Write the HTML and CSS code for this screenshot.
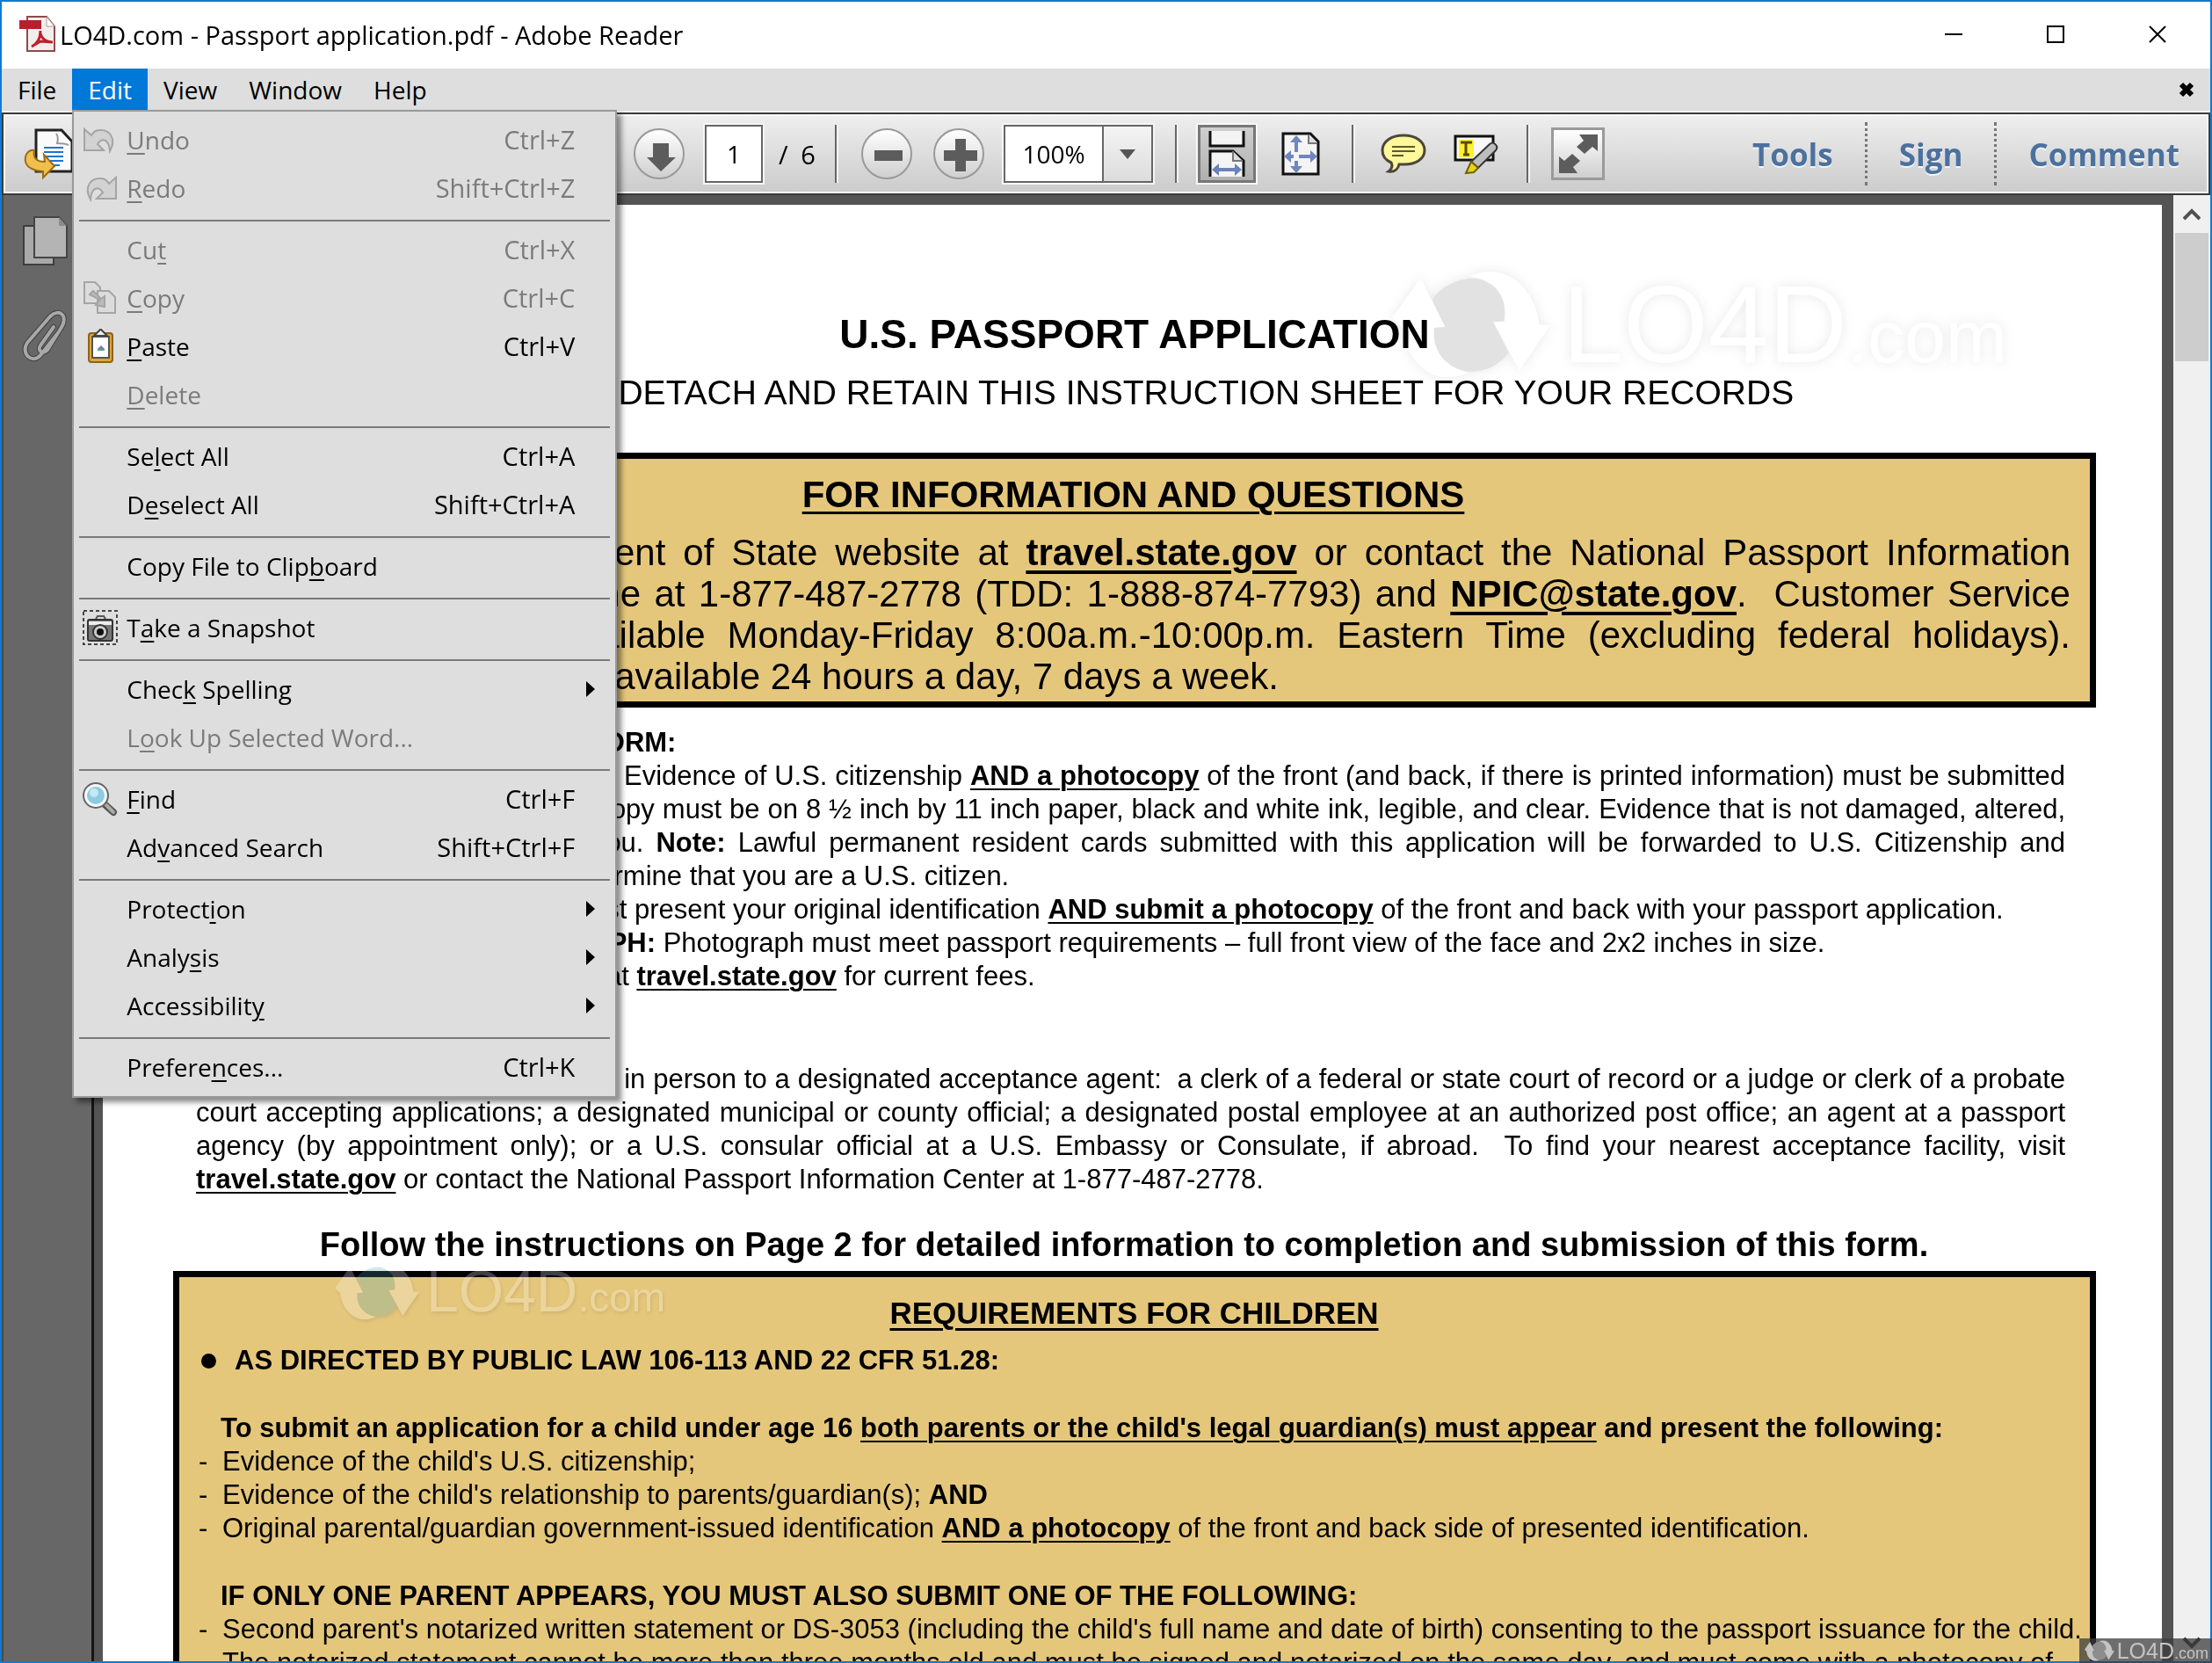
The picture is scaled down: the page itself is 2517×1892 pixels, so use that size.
FILE: index.html
```html
<!DOCTYPE html>
<html lang="en">
<head>
<meta charset="utf-8">
<title>LO4D.com - Passport application.pdf - Adobe Reader</title>
<link rel="stylesheet" href="styles.css">
</head>
<body>
<div class="window">
  <header class="titlebar">
    <svg class="app-icon" width="42" height="42" viewBox="0 0 42 42" aria-hidden="true">
      <path d="M9 1h22l9 11v28H9z" fill="#f3eeee" stroke="#8d4a4c" stroke-width="2"/>
      <path d="M31 1v11h9z" fill="#fff" stroke="#b59a9a"/>
      <path d="M0 5h25v10H0z" fill="#b5202c"/>
      <path d="M14 35c6-3 10-9 10-18M14 35l10-6 14 1M24 20c1 5 5 9 13 10" fill="none" stroke="#c11f2b" stroke-width="3"/>
    </svg>
    <h1 class="title">LO4D.com - Passport application.pdf - Adobe Reader</h1>
    <div class="caption">
      <button class="cap" aria-label="Minimize"><svg width="20" height="20"><path d="M0 10h20" stroke="#000" stroke-width="2"/></svg></button>
      <button class="cap" aria-label="Maximize"><svg width="20" height="20"><path d="M1 1h18v18H1z" fill="none" stroke="#000" stroke-width="2"/></svg></button>
      <button class="cap" aria-label="Close"><svg width="20" height="20"><path d="M1 1l18 18M19 1L1 19" stroke="#000" stroke-width="2"/></svg></button>
    </div>
  </header>

  <nav class="menubar">
    <button class="mb">File</button>
    <div class="mb-open">
      <button class="mb active" aria-expanded="true">Edit</button>
      <div class="menu" role="menu">
        <button class="item" role="menuitem" disabled>
          <svg class="ico" viewBox="0 0 40 40"><path d="M2 8v24h22l-7-7c5-8 13-6 14 8 8-14 0-25-12-24-5 0-7 3-9 6z" fill="#d2d2d2" stroke="#a5a5a5" stroke-width="2"/></svg>
          <span><u>U</u>ndo</span><kbd>Ctrl+Z</kbd></button>
        <button class="item" role="menuitem" disabled>
          <svg class="ico" viewBox="0 0 40 40"><path d="M38 8v24H16l7-7c-5-8-13-6-14 8C1 19 9 8 21 9c5 0 7 3 9 6z" fill="#d2d2d2" stroke="#a5a5a5" stroke-width="2"/></svg>
          <span><u>R</u>edo</span><kbd>Shift+Ctrl+Z</kbd></button>
        <hr>
        <button class="item" role="menuitem" disabled><i class="ico"></i><span>Cu<u>t</u></span><kbd>Ctrl+X</kbd></button>
        <button class="item" role="menuitem" disabled>
          <svg class="ico" viewBox="0 0 40 40"><g fill="#dcdcdc" stroke="#a5a5a5" stroke-width="2"><path d="M2 2h12l6 6v18H2z"/><path d="M17 12h13l7 7v18H17z"/><path d="M8 16l12 6-5 6 10 2V18l-4 3-9-9z" fill="#bbb"/></g></svg>
          <span><u>C</u>opy</span><kbd>Ctrl+C</kbd></button>
        <button class="item" role="menuitem">
          <svg class="ico" viewBox="0 0 40 40"><rect x="7" y="5" width="27" height="33" rx="3" fill="#e0a63a" stroke="#8a6420" stroke-width="2"/><path d="M11 9h19v24H11z" fill="#fff" stroke="#555" stroke-width="2"/><path d="M13 8l4-4 3-3h1l3 3 4 4z" fill="#eee" stroke="#444" stroke-width="2"/><path d="M17 23l4-4 4 4z" fill="#8a6fb5"/><path d="M17 23h8v2h-8z" fill="#5aa77a"/></svg>
          <span><u>P</u>aste</span><kbd>Ctrl+V</kbd></button>
        <button class="item" role="menuitem" disabled><i class="ico"></i><span><u>D</u>elete</span></button>
        <hr>
        <button class="item" role="menuitem"><i class="ico"></i><span>Se<u>l</u>ect All</span><kbd>Ctrl+A</kbd></button>
        <button class="item" role="menuitem"><i class="ico"></i><span>D<u>e</u>select All</span><kbd>Shift+Ctrl+A</kbd></button>
        <hr>
        <button class="item" role="menuitem"><i class="ico"></i><span>Copy File to Clip<u>b</u>oard</span></button>
        <hr>
        <button class="item" role="menuitem">
          <svg class="ico" viewBox="0 0 40 40"><rect x="1" y="1" width="38" height="38" fill="none" stroke="#444" stroke-width="2" stroke-dasharray="4 3"/><path d="M14 12l3-5h7l3 5" fill="#ddd" stroke="#555" stroke-width="2"/><rect x="6" y="11" width="28" height="24" rx="2" fill="#777" stroke="#333" stroke-width="2"/><path d="M7 13h26v4H7z" fill="#eee"/><circle cx="20" cy="25" r="8" fill="#ccc" stroke="#333" stroke-width="2"/><circle cx="20" cy="25" r="4" fill="#111"/></svg>
          <span>T<u>a</u>ke a Snapshot</span></button>
        <hr>
        <button class="item" role="menuitem"><i class="ico"></i><span>Chec<u>k</u> Spelling</span><svg class="sub" viewBox="0 0 10 18"><path d="M0 0l10 9-10 9z"/></svg></button>
        <button class="item" role="menuitem" disabled><i class="ico"></i><span>L<u>o</u>ok Up Selected Word...</span></button>
        <hr>
        <button class="item" role="menuitem">
          <svg class="ico" viewBox="0 0 40 40"><path d="M25 26l10 9" stroke="#555" stroke-width="8" stroke-linecap="round"/><path d="M27 27l8 8" stroke="#aaa" stroke-width="4" stroke-linecap="round"/><circle cx="15" cy="16" r="14" fill="#f4f8fa" stroke="#666" stroke-width="2"/><circle cx="15" cy="16" r="10" fill="#8ecbe0"/><circle cx="13" cy="13" r="5" fill="#c6e8f2"/></svg>
          <span><u>F</u>ind</span><kbd>Ctrl+F</kbd></button>
        <button class="item" role="menuitem"><i class="ico"></i><span>Ad<u>v</u>anced Search</span><kbd>Shift+Ctrl+F</kbd></button>
        <hr>
        <button class="item" role="menuitem"><i class="ico"></i><span>Protect<u>i</u>on</span><svg class="sub" viewBox="0 0 10 18"><path d="M0 0l10 9-10 9z"/></svg></button>
        <button class="item" role="menuitem"><i class="ico"></i><span>Analy<u>s</u>is</span><svg class="sub" viewBox="0 0 10 18"><path d="M0 0l10 9-10 9z"/></svg></button>
        <button class="item" role="menuitem"><i class="ico"></i><span>Accessibilit<u>y</u></span><svg class="sub" viewBox="0 0 10 18"><path d="M0 0l10 9-10 9z"/></svg></button>
        <hr>
        <button class="item" role="menuitem"><i class="ico"></i><span>Prefere<u>n</u>ces...</span><kbd>Ctrl+K</kbd></button>
      </div>
    </div>
    <button class="mb">View</button>
    <button class="mb">Window</button>
    <button class="mb">Help</button>
    <button class="doc-close" aria-label="Close document"><svg width="18" height="18"><path d="M3 3l12 12M15 3L3 15" stroke="#000" stroke-width="6"/></svg></button>
  </nav>

  <div class="toolbar">
    <button class="tool convert" aria-label="Convert">
      <svg width="60" height="60" viewBox="0 0 60 60"><path d="M15 3h29l12 13v34H15z" fill="#fafafa" stroke="#222" stroke-width="3"/><path d="M38 7c2 3 2 8 1 11 5 0 9 0 13 2" fill="none" stroke="#999" stroke-width="2"/><path d="M24 23h22M24 28h22M24 33h22M24 38h22M34 43h8" stroke="#1f74d0" stroke-width="2"/><path d="M13 26C2 24-2 42 10 47c4 2 8 3 13 3v7l13-13-12-13 1 8c-8 0-14-3-12-13z" fill="#efc04e" stroke="#9a6c14" stroke-width="2"/></svg>
    </button>
    <button class="tool round" aria-label="Next page"><svg width="58" height="58" viewBox="0 0 58 58"><path class="glyph" d="M20 15h18v16h8L29 47 13 31h7z"/></svg></button>
    <input class="page-no" type="text" value="1" aria-label="Page number">
    <span class="page-total">/&ensp;6</span>
    <span class="sep"></span>
    <button class="tool round minus" aria-label="Zoom out"><svg width="58" height="58" viewBox="0 0 58 58"><path class="glyph" d="M13 23h32v12H13z"/></svg></button>
    <button class="tool round plus" aria-label="Zoom in"><svg width="58" height="58" viewBox="0 0 58 58"><path class="glyph" d="M23 10h12v13h13v12H35v12H23V35H10V23h13z"/></svg></button>
    <div class="zoom">
      <select aria-label="Zoom level"><option>100%</option></select>
      <svg class="drop" width="54" height="62" viewBox="0 0 54 62" aria-hidden="true"><path d="M18 26h18l-9 11z" fill="#555"/></svg>
    </div>
    <span class="sep"></span>
    <button class="tool pressed" aria-label="Fit width" aria-pressed="true">
      <svg width="44" height="54" viewBox="0 0 44 54"><path d="M3 1v17h38V1" fill="#f4f4f4" stroke="#111" stroke-width="3"/><path d="M3 53V24h26l12 11v18" fill="#f4f4f4" stroke="#111" stroke-width="3"/><path d="M29 24v11h11" fill="#ddd" stroke="#777" stroke-width="2"/><path d="M5 45l8-7v5h18v-5l8 7-8 7v-5H13v5z" fill="#6b82bb"/></svg>
    </button>
    <button class="tool fitpage" aria-label="Fit page">
      <svg width="44" height="50" viewBox="0 0 44 50"><path d="M2 2h31l9 9v37H2z" fill="#f4f4f4" stroke="#111" stroke-width="3"/><path d="M31 3v10h10" fill="#ddd" stroke="#777" stroke-width="2"/><path d="M17 4l7 8h-5v11h-4V12h-5zM17 47l7-8h-5v-6h-4v6h-5zM3 28l8-7v5h3v4h-3v5zM41 28l-8-7v5H20v4h13v5z" fill="#6f86c0"/></svg>
    </button>
    <span class="sep"></span>
    <button class="tool note" aria-label="Add sticky note">
      <svg width="52" height="46" viewBox="0 0 52 46"><path d="M26 2c14 0 24 7 24 17S40 35 27 35c-3 0-4 0-6 0-1 5-5 9-12 8 4-3 5-6 3-10C5 30 2 25 2 19 2 9 12 2 26 2z" fill="#fdf89a" stroke="#4c463a" stroke-width="3"/><path d="M13 15h26M13 20h26M13 25h13" stroke="#5d5833" stroke-width="2"/></svg>
    </button>
    <button class="tool mark" aria-label="Highlight text">
      <svg width="52" height="46" viewBox="0 0 52 46"><rect x="2" y="3" width="43" height="27" fill="#f8f8f8" stroke="#111" stroke-width="3"/><path d="M6 7h17v20H6z" fill="#ffef30"/><path d="M8 10h13M14 9v15M11 24h7" stroke="#5a4a00" stroke-width="3"/><path d="M41 12c4-4 11 2 7 7L28 39l-8-7z" fill="#bdbdbd" stroke="#333" stroke-width="2"/><path d="M20 32l8 7-5 5-9 1z" fill="#e9d51c" stroke="#6d6100" stroke-width="2"/></svg>
    </button>
    <span class="sep"></span>
    <button class="tool full" aria-label="Full screen">
      <svg width="50" height="50" viewBox="0 0 50 50"><path class="glyph" d="M47 3v19l-6-5-9 8-9-8 8-7-5-7zM3 47V28l6 5 9-8 9 8-8 7 5 7z"/></svg>
    </button>
    <div class="panes">
      <button>Tools</button><button>Sign</button><button>Comment</button>
    </div>
  </div>

  <div class="workspace">
    <aside class="rail">
      <button aria-label="Page thumbnails"><svg width="54" height="60" viewBox="0 0 54 60"><path d="M2 12h34v44H2z" fill="#a9a9a9" stroke="#3e3e3e" stroke-width="2"/><path d="M14 2h28l9 10v36H14z" fill="#b4b4b4" stroke="#444" stroke-width="2"/><path d="M42 2v10h9z" fill="#8c8c8c"/></svg></button>
      <button aria-label="Attachments"><svg width="54" height="62" viewBox="0 0 54 62"><g fill="none" stroke-linecap="round"><path d="M36 20L21 41c-4 6 3 11 8 5l15-24C54 7 42-2 32 8L6 38c-8 12 6 26 16 13l18-23" stroke="#3f3f3f" stroke-width="6"/><path d="M36 20L21 41c-4 6 3 11 8 5l15-24C54 7 42-2 32 8L6 38c-8 12 6 26 16 13l18-23" stroke="#a8a8a8" stroke-width="4"/></g></svg></button>
    </aside>
    <main class="canvas">
      <article class="page">
        <h2 class="doc-title">U.S. PASSPORT APPLICATION</h2>
        <p class="doc-sub">PLEASE DETACH AND RETAIN THIS INSTRUCTION SHEET FOR YOUR RECORDS</p>
        <section class="box info">
          <h3>FOR INFORMATION AND QUESTIONS</h3>
          <p class="full-line">Visit the official Department of State website at <a href="#">travel.state.gov</a> or contact the National Passport Information</p>
          <p class="full-line">Center (NPIC) toll-free line at 1-877-487-2778 (TDD: 1-888-874-7793) and <a href="#">NPIC@state.gov</a>.&nbsp; Customer Service</p>
          <p class="full-line">Representatives are available Monday-Friday 8:00a.m.-10:00p.m. Eastern Time (excluding federal holidays).</p>
          <p>Automated information is available 24 hours a day, 7 days a week.</p>
        </section>
        <section class="prose">
          <p><b>WHAT TO SUBMIT WITH THIS FORM:</b></p>
          <p class="full-line"><b>1. PROOF OF U.S. CITIZENSHIP:</b> Evidence of U.S. citizenship <b><u>AND a photocopy</u></b> of the front (and back, if there is printed information) must be submitted</p>
          <p class="full-line">with your application. Each photocopy must be on 8 ½ inch by 11 inch paper, black and white ink, legible, and clear. Evidence that is not damaged, altered,</p>
          <p class="full-line">or forged, must be returned to you. <b>Note:</b> Lawful permanent resident cards submitted with this application will be forwarded to U.S. Citizenship and</p>
          <p>Immigration Services, as they determine that you are a U.S. citizen.</p>
          <p><b>2. PROOF OF IDENTITY:</b> You must present your original identification <b><u>AND submit a photocopy</u></b> of the front and back with your passport application.</p>
          <p><b>3. RECENT COLOR PHOTOGRAPH:</b> Photograph must meet passport requirements – full front view of the face and 2x2 inches in size.</p>
          <p><b>4. FEES:</b> Please visit our website at <a href="#">travel.state.gov</a> for current fees.</p>
        </section>
        <section class="prose how">
          <p><b>HOW TO SUBMIT THIS FORM:</b></p>
          <p class="full-line">Complete and send the application in person to a designated acceptance agent:&nbsp; a clerk of a federal or state court of record or a judge or clerk of a probate</p>
          <p class="full-line">court accepting applications; a designated municipal or county official; a designated postal employee at an authorized post office; an agent at a passport</p>
          <p class="full-line">agency (by appointment only); or a U.S. consular official at a U.S. Embassy or Consulate, if abroad.&nbsp; To find your nearest acceptance facility, visit</p>
          <p><a href="#">travel.state.gov</a> or contact the National Passport Information Center at 1-877-487-2778.</p>
        </section>
        <p class="follow">Follow the instructions on Page 2 for detailed information to completion and submission of this form.</p>
        <section class="box children">
          <h3>REQUIREMENTS FOR CHILDREN</h3>
          <p class="bullet">AS DIRECTED BY PUBLIC LAW 106-113 AND 22 CFR 51.28:</p>
          <p class="lead">To submit an application for a child under age 16 <u>both parents or the child's legal guardian(s) must appear</u> and present the following:</p>
          <ul>
            <li>Evidence of the child's U.S. citizenship;</li>
            <li>Evidence of the child's relationship to parents/guardian(s); <b>AND</b></li>
            <li>Original parental/guardian government-issued identification <b><u>AND a photocopy</u></b> of the front and back side of presented identification.</li>
          </ul>
          <p class="lead">IF ONLY ONE PARENT APPEARS, YOU MUST ALSO SUBMIT ONE OF THE FOLLOWING:</p>
          <ul>
            <li>Second parent's notarized written statement or DS-3053 (including the child's full name and date of birth) consenting to the passport issuance for the child.</li>
            <li class="more">The notarized statement cannot be more than three months old and must be signed and notarized on the same day, and must come with a photocopy of</li>
          </ul>
        </section>
      </article>
      <div class="mark-logo large" aria-hidden="true">
        <svg viewBox="0 0 200 240" preserveAspectRatio="none"><path d="M51 66l16 60-14 4-2 51c12 28 28 43 49 43s37-17 47-40l-19-68 14-2 3-64c-12-20-27-29-45-29S61 40 51 66z" class="disc"/><path d="M36 20l31 106-14 2c-2 50 12 85 44 98-50 40-82-40-84-98L0 107zM161 222l-33-106 14-2c4-50-8-88-45-98 50-38 86 36 89 106l14 1z" fill="#fff"/></svg>
        <span>LO4D<small>.com</small></span>
      </div>
      <div class="mark-logo small" aria-hidden="true">
        <svg viewBox="0 0 200 240" preserveAspectRatio="none"><path d="M51 66l16 60-14 4-2 51c12 28 28 43 49 43s37-17 47-40l-19-68 14-2 3-64c-12-20-27-29-45-29S61 40 51 66z" class="disc"/><path d="M36 20l31 106-14 2c-2 50 12 85 44 98-50 40-82-40-84-98L0 107zM161 222l-33-106 14-2c4-50-8-88-45-98 50-38 86 36 89 106l14 1z" fill="#fff"/></svg>
        <span>LO4D<small>.com</small></span>
      </div>
    </main>
    <div class="scrollbar">
      <button aria-label="Scroll up"><svg width="20" height="16" viewBox="0 0 20 16"><path d="M1 13l9-9 9 9" fill="none" stroke="#505050" stroke-width="4"/></svg></button>
      <div class="thumb"></div>
      <button class="down" aria-label="Scroll down"><svg width="20" height="16" viewBox="0 0 20 16"><path d="M1 3l9 9 9-9" fill="none" stroke="#303030" stroke-width="4"/></svg></button>
    </div>
  </div>
</div>
<div class="corner" aria-hidden="true">
  <svg viewBox="0 0 200 240" preserveAspectRatio="none"><path d="M51 66l16 60-14 4-2 51c12 28 28 43 49 43s37-17 47-40l-19-68 14-2 3-64c-12-20-27-29-45-29S61 40 51 66z" fill="#8d8d8d"/><path d="M36 20l31 106-14 2c-2 50 12 85 44 98-50 40-82-40-84-98L0 107zM161 222l-33-106 14-2c4-50-8-88-45-98 50-38 86 36 89 106l14 1z" fill="#c4c4c4"/></svg>
  <span>LO4D<small>.com</small></span>
</div>
</body>
</html>
```

FILE: styles.css
```css
* { box-sizing: border-box; }
body { margin: 0; font-family: "Open Sans", "Noto Sans", sans-serif; font-size: 28px; color: #000; }
button, input, select { font: inherit; color: inherit; border: 0; padding: 0; margin: 0; background: none; border-radius: 0; }
svg { display: block; flex: none; }
h1, h2, h3, p, ul { margin: 0; padding: 0; }

.window { height: 100vh; display: flex; flex-direction: column; border: 2px solid #0f7ad4; overflow: hidden; background: #fff; }

/* title bar */
.titlebar { display: flex; align-items: center; height: 76px; flex: none; padding: 0 2px 2px 20px; }
.title { flex: 1; margin-left: 4px; font-size: 29px; font-weight: 400; }
.caption { display: flex; height: 72px; }
.cap { width: 116px; display: grid; place-items: center; }

/* menu bar */
.menubar { position: relative; z-index: 5; display: flex; height: 50px; flex: none; background: #dedede; border-bottom: 2px solid #f2f2f2; }
.mb { height: 47px; padding: 0 18px; }
.mb-open { position: relative; }
.mb.active { background: #0078d7; color: #fff; }
.doc-close { margin-left: auto; width: 54px; display: grid; place-items: center; }

.menu { position: absolute; top: 47px; left: 0; width: 620px; padding: 6px 4px 4px; background: #dedede; border: 2px solid #9a9a9a; box-shadow: 5px 5px 6px rgba(0,0,0,.45); }
.menu hr { height: 2px; margin: 7px 2px 6px; border: 0; background: #7a7a7a; }
.item { display: flex; align-items: center; width: 100%; height: 55px; padding: 0 42px 4px 6px; text-align: left; }
.item span { flex: 1; }
.item:disabled { color: #7b7b7b; }
.item kbd { font: inherit; font-size: 29px; }
.item u { text-underline-offset: 4px; text-decoration-thickness: 2px; }
.ico { width: 40px; height: 40px; margin-right: 10px; flex: none; }
.sub { width: 12px; height: 18px; margin-right: -24px; }

/* toolbar */
.toolbar { display: flex; align-items: center; height: 94px; flex: none; padding: 0 2px 0 22px; background: linear-gradient(#efefef, #cbcbcb); border: 2px solid #3a3a3a; box-shadow: inset 0 0 0 2px #fafafa; }
.tool { display: grid; place-items: center; flex: none; }
.glyph { fill: #5c5c5c; }
.convert { margin-right: 635px; }
.round { width: 58px; height: 58px; border: 2px solid #999; border-radius: 50%; background: linear-gradient(#fff, #cfcfcf); }
.page-no { width: 66px; height: 66px; margin-left: 23px; border: 2px solid #666; background: #fff; text-align: center; outline: 2px solid #f6f6f6; }
.page-total { width: 62px; margin-left: 18px; font-size: 29px; white-space: nowrap; }
.sep { width: 2px; height: 66px; margin: 0 4px 0 2px; background: #666; box-shadow: 2px 0 0 #f4f4f4; flex: none; }
.minus { margin-left: 24px; }
.plus { margin: 0 22px 0 24px; }
.zoom { display: flex; width: 170px; height: 66px; margin-right: 23px; border: 2px solid #666; outline: 2px solid #f6f6f6; }
.zoom select { appearance: none; width: 114px; background: #fff; text-align: center; border-right: 2px solid #666; }
.drop { background: linear-gradient(#f4f4f4, #dcdcdc); }
.pressed { width: 66px; height: 66px; margin-left: 20px; background: linear-gradient(#cfcfcf, #b0b0b0); border: 3px solid #777; outline: 2px solid #f8f8f8; }
.fitpage { margin: 0 34px 0 29px; }
.note { margin: 0 31px 0 27px; }
.mark { margin-right: 29px; }
.full { width: 61px; height: 60px; margin-left: 22px; border: 3px solid #9a9a9a; background: linear-gradient(#fff, #cfcfcf); }
.panes { display: flex; margin-left: auto; }
.panes button { height: 72px; padding: 0 36px; font-size: 35px; font-weight: 700; color: #4b719f; text-shadow: 0 2px 0 #f4f4f4; border-left: 3px dotted #777; }
.panes button:first-child { border-left: 0; }
.panes button:last-child { padding-right: 31px; }

/* work area */
.workspace { display: flex; flex: 1; min-height: 0; }
.rail { width: 105px; flex: none; display: flex; flex-direction: column; align-items: flex-start; gap: 47px; padding: 23px 0 0 21px; background: #676767; border-left: 2px solid #4a4a4a; border-right: 3px solid #151515; }
.canvas { position: relative; flex: 1; min-width: 0; padding: 11px 13px 0 10px; background: #545454; overflow: hidden; }
.scrollbar { width: 42px; flex: none; display: flex; flex-direction: column; background: #f0f0f0; }
.scrollbar button { height: 43px; display: grid; place-items: center; flex: none; }
.thumb { height: 146px; margin: 0 2px; background: #cdcdcd; }
.scrollbar .down { margin-top: auto; }

/* document */
.page { padding: 120px 75px 0 80px; background: #fff; font-family: "Liberation Sans", Arial, sans-serif; font-size: 31px; line-height: 38px; min-height: 100%; }
.page p, .page li { white-space: nowrap; }
.page a { color: inherit; font-weight: 700; text-decoration: underline; }
.page a, .page u { text-decoration-thickness: 2px; text-underline-offset: 4px; }
.page .full-line { text-align-last: justify; white-space: normal; }
.doc-title { font-size: 46px; line-height: 54px; text-align: center; }
.page .doc-sub { margin-top: 17px; font-size: 39px; line-height: 46px; text-align: center; }
.box { background: #e5c77c; border: 7px solid #000; }
.box h3 { text-align: center; text-decoration: underline; text-decoration-thickness: 3px; text-underline-offset: 5px; }
.info { margin-top: 45px; padding: 17px 22px 5px 19px; font-size: 42px; line-height: 47px; }
.info h3 { margin-bottom: 18px; font-size: 42px; line-height: 48px; }
.info a { text-decoration-thickness: 4px; text-underline-offset: 6px; }
.prose { padding: 0 35px 0 26px; margin-top: 21px; }
.prose.how { margin-top: 41px; }
.page .follow { margin: 32px 0 7px; padding-right: 24px; font-size: 38px; line-height: 46px; font-weight: 700; text-align: center; }
.children { padding: 22px 20px 0 19px; }
.children h3 { font-size: 35px; }
.bullet { display: flex; align-items: center; gap: 21px; margin-top: 16px; padding-left: 6px; font-weight: 700; }
.bullet::before { content: ""; width: 17px; height: 17px; border-radius: 50%; background: #000; }
.lead { margin-top: 39px; padding-left: 28px; font-weight: 700; }
.children ul { list-style: none; }
.children li { padding-left: 30px; text-indent: -27px; }
.children li::before { content: "-"; display: inline-block; width: 27px; text-indent: 0; }
.children .more { text-indent: 0; }
.children .more::before { content: none; }

/* watermarks */
.mark-logo, .corner { display: flex; align-items: center; font-family: "Liberation Sans", Arial, sans-serif; line-height: 1; }
.mark-logo { position: absolute; color: #fff; }
.large { left: 1477px; top: 84px; gap: 14px; font-size: 124px; filter: drop-shadow(0 0 7px rgba(0,0,0,.09)); mix-blend-mode: multiply; }
.large svg { width: 180px; height: 125px; }
.large small { font-size: 84px; }
.large .disc { fill: #e2e2e2; }
.small { left: 274px; top: 1214px; gap: 8px; font-size: 66px; opacity: .25; filter: drop-shadow(1px 2px 2px rgba(0,0,0,.4)); }
.small svg { width: 96px; height: 66px; }
.small small { font-size: 46px; }
.small .disc { fill: #4fa6b5; }
.corner { position: fixed; right: 0; bottom: 0; z-index: 9; gap: 3px; height: 28px; padding: 0 4px 0 6px; background: rgba(60,60,60,.75); color: #c4c4c4; font-size: 25px; }
.corner svg { width: 34px; height: 24px; }
.corner small { font-size: 18px; }
```
